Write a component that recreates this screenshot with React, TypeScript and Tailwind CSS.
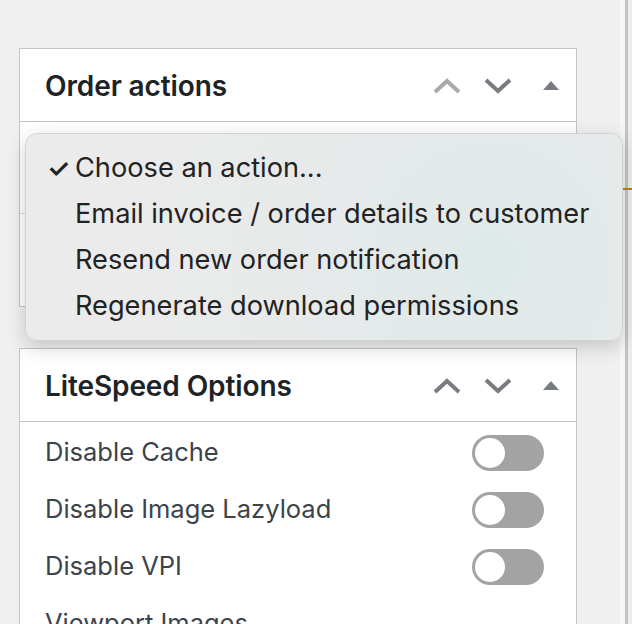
import React from "react";

const font = { fontFamily: "Inter, 'Noto Sans', 'Liberation Sans', sans-serif" };

function ChevronUp({ color }: { color: string }) {
  return (
    <svg width="28" height="16" viewBox="0 0 28 16" fill="none">
      <path d="M2 14 L14 3 L26 14" stroke={color} strokeWidth="4" />
    </svg>
  );
}

function ChevronDown({ color }: { color: string }) {
  return (
    <svg width="28" height="16" viewBox="0 0 28 16" fill="none">
      <path d="M2 2 L14 13 L26 2" stroke={color} strokeWidth="4" />
    </svg>
  );
}

function Triangle() {
  return (
    <svg width="16" height="9" viewBox="0 0 16 9">
      <polygon points="0,9 8,0 16,9" fill="#787c82" />
    </svg>
  );
}

function PanelHeader({ title, upDisabled }: { title: string; upDisabled?: boolean }) {
  return (
    <div className="flex h-[73px] items-center border-b border-[#c3c4c7] pl-[25px] pr-[17px] pt-[2px]">
      <h2 className="flex-1 text-[28px] font-semibold tracking-[-0.1px] text-[#1d2327]">{title}</h2>
      <div className="flex items-center">
        <ChevronUp color={upDisabled ? "#a7aaad" : "#787c82"} />
        <div className="ml-[23px]">
          <ChevronDown color="#787c82" />
        </div>
        <div className="ml-[31px] mb-[2px]">
          <Triangle />
        </div>
      </div>
    </div>
  );
}

function Toggle() {
  return (
    <div className="flex h-[36px] w-[72px] items-center rounded-full bg-[#a3a3a3] pl-[3px]">
      <div className="h-[30px] w-[30px] rounded-full bg-white" />
    </div>
  );
}

const options = ["Disable Cache", "Disable Image Lazyload", "Disable VPI", "Viewport Images"];

const actions = [
  "Choose an action...",
  "Email invoice / order details to customer",
  "Resend new order notification",
  "Regenerate download permissions",
];

export default function App() {
  return (
    <div className="relative flex h-[624px] w-[632px] overflow-hidden bg-[#f0f0f1]" style={font}>
      <div className="flex-1 pl-[19px] pt-[48px]">
        <div className="w-[558px] border border-[#c3c4c7] bg-white">
          <PanelHeader title="Order actions" upDisabled />
          <div className="h-[92px] border-b border-[#dcdcde]" />
          <div className="h-[92px]" />
        </div>

        <div className="mt-[41px] w-[558px] border border-[#c3c4c7] bg-white">
          <PanelHeader title="LiteSpeed Options" />
          <div className="pt-[2px]">
            {options.map((o) => (
              <div key={o} className="flex h-[57px] items-center justify-between pl-[25px] pr-[32px]">
                <span className="text-[25.5px] text-[#3c434a]">{o}</span>
                {o !== "Viewport Images" && <Toggle />}
              </div>
            ))}
          </div>
        </div>
      </div>

      <div className="flex w-[12px]">
        <div className="w-[5px] bg-[#f6f6f6]" />
        <div className="w-[3px] bg-[#c4c4c4]" />
        <div className="flex-1 bg-[#ededed]" />
      </div>
      <div className="absolute left-[620px] top-[188px] h-[2px] w-[12px] bg-[#b8860b]" />

      <div className="absolute left-[25px] top-[133px] w-[598px] rounded-[12px] border border-[#d2d2d2] bg-[radial-gradient(circle_at_78%_62%,#dfe9e9_0%,#e8eaea_45%,#ebebeb_80%)] py-[11px] shadow-[0_6px_20px_rgba(0,0,0,0.18)]">
        {actions.map((a, i) => (
          <div key={a} className="flex h-[46px] items-center text-[27.2px] text-[#222222]">
            <span className="w-[49px] pl-[21px] text-[26px] font-semibold">{i === 0 ? "✓" : ""}</span>
            <span>{a}</span>
          </div>
        ))}
      </div>
    </div>
  );
}
